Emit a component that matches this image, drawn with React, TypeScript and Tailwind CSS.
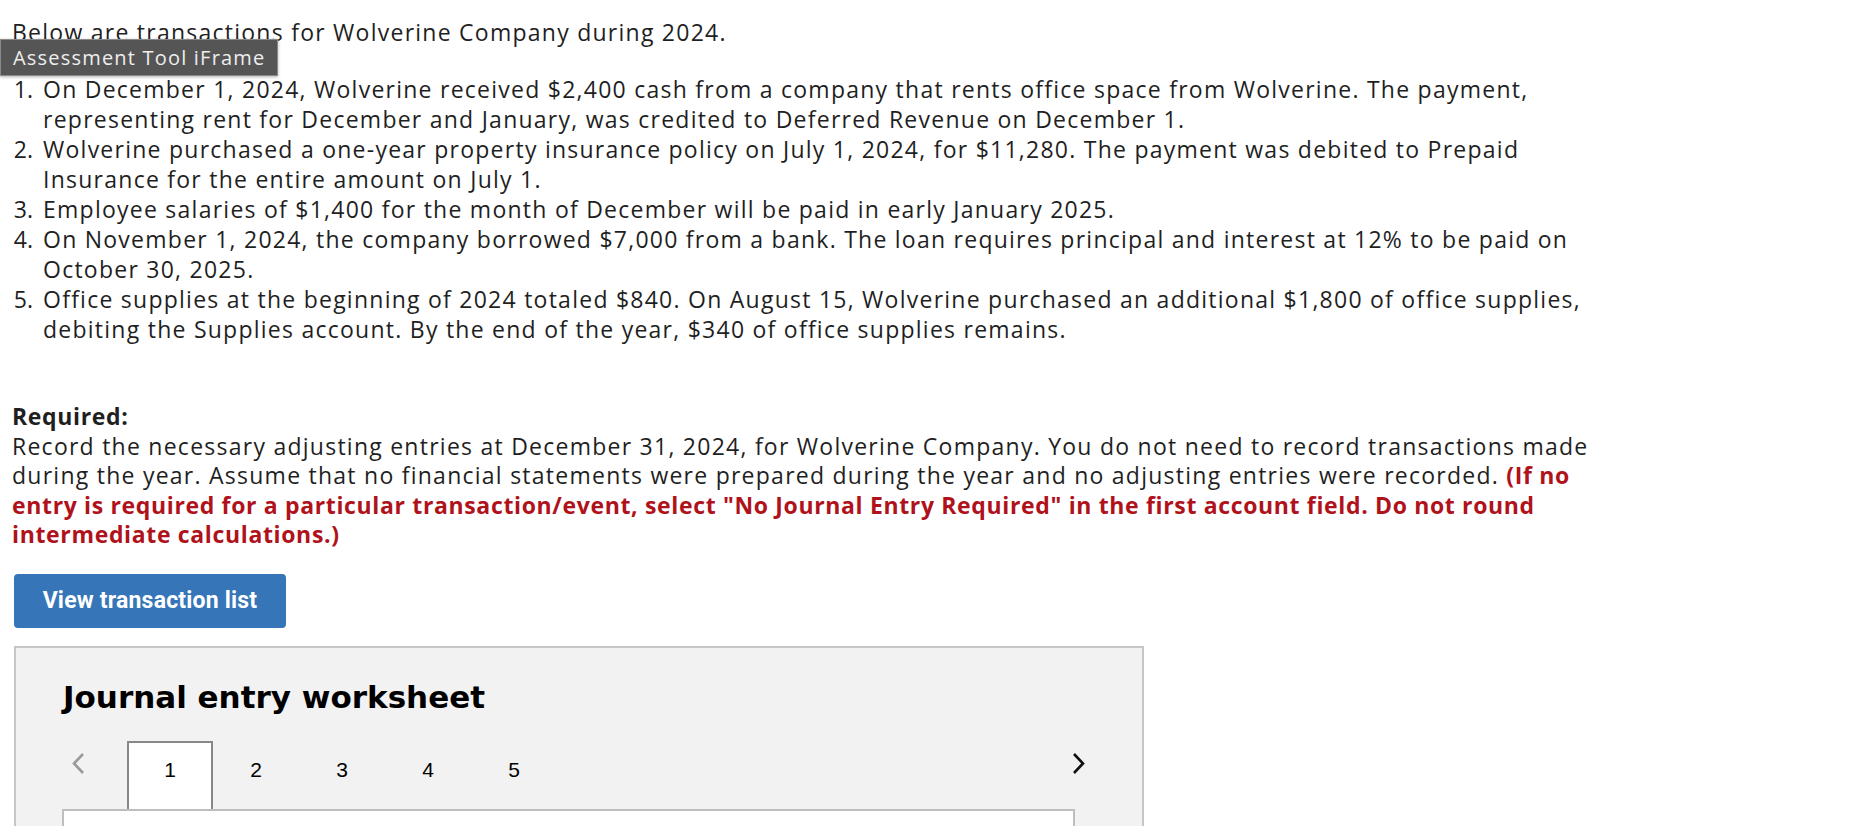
const BODY = "font-['Open_Sans',sans-serif]";

function ChevronLeft({ className }: { className?: string }) {
  return (
    <svg width="14" height="23" viewBox="0 0 14 23" className={className} fill="none">
      <path d="M12 2 L3 11.5 L12 21" stroke="currentColor" strokeWidth="2.6" />
    </svg>
  );
}
function ChevronRight({ className }: { className?: string }) {
  return (
    <svg width="14" height="23" viewBox="0 0 14 23" className={className} fill="none">
      <path d="M2 2 L11 11.5 L2 21" stroke="currentColor" strokeWidth="2.6" />
    </svg>
  );
}

export default function App() {
  const items: React.ReactNode[] = [
    <>
      On December 1, 2024, Wolverine received $2,400 cash from a company that rents office space from Wolverine. The payment,
      <br />
      representing rent for December and January, was credited to Deferred Revenue on December 1.
    </>,
    <>
      Wolverine purchased a one-year property insurance policy on July 1, 2024, for $11,280. The payment was debited to Prepaid
      <br />
      Insurance for the entire amount on July 1.
    </>,
    <>Employee salaries of $1,400 for the month of December will be paid in early January 2025.</>,
    <>
      On November 1, 2024, the company borrowed $7,000 from a bank. The loan requires principal and interest at 12% to be paid on
      <br />
      October 30, 2025.
    </>,
    <>
      Office supplies at the beginning of 2024 totaled $840. On August 15, Wolverine purchased an additional $1,800 of office supplies,
      <br />
      debiting the Supplies account. By the end of the year, $340 of office supplies remains.
    </>,
  ];

  return (
    <div className={`relative min-h-[826px] bg-white text-[#1f1f1f] ${BODY}`}>
      <div className="pt-[17px]">
        <p className="whitespace-nowrap pl-[12px] text-[23px] leading-[30px] tracking-[1.25px]">
          Below are transactions for Wolverine Company during 2024.
        </p>
        <ol className="mt-[27px] text-[23px] leading-[30px] tracking-[1.25px]">
          {items.map((it, i) => (
            <li key={i} className="flex whitespace-nowrap">
              <span className="w-[43px] shrink-0 pr-[10px] text-right tracking-[0px]">{i + 1}.</span>
              <span>{it}</span>
            </li>
          ))}
        </ol>
        <div className="mt-[58px] whitespace-nowrap pl-[12px] text-[23px] leading-[29.6px] tracking-[1.25px]">
          <p className="font-bold tracking-[0.65px]">Required:</p>
          <p>
            Record the necessary adjusting entries at December 31, 2024, for Wolverine Company. You do not need to record transactions made
            <br />
            during the year. Assume that no financial statements were prepared during the year and no adjusting entries were recorded.{" "}
            <span className="font-bold tracking-[0.65px] text-[#b0121b]">
              (If no
              <br />
              entry is required for a particular transaction/event, select "No Journal Entry Required" in the first account field. Do not round
              <br />
              intermediate calculations.)
            </span>
          </p>
        </div>
        <div className="mt-[24px] pl-[14px]">
          <button className="flex h-[54px] w-[272px] items-center justify-center rounded-[4px] bg-[#3575b8] font-['Roboto',sans-serif] text-[23px] font-bold tracking-[0.2px] text-white">
            View transaction list
          </button>
        </div>
        <div className="ml-[14px] mt-[18px] w-[1130px] border-2 border-[#c6c6c6] bg-[#f2f2f2]">
          <h2 className="pl-[47px] pt-[31px] font-['DejaVu_Sans',sans-serif] text-[31px] font-bold leading-[36px] text-black">
            Journal entry worksheet
          </h2>
          <div className="mt-[26px] flex items-start pl-[55px] pr-[56px]">
            <ChevronLeft className="mt-[11px] text-[#9a9a9a]" />
            <div className="ml-[42px] flex">
              {[1, 2, 3, 4, 5].map((n) => (
                <div
                  key={n}
                  className={`h-[68px] w-[86px] border-2 border-b-0 pt-[15px] text-center font-['Liberation_Sans',sans-serif] text-[21px] leading-[24px] text-black ${
                    n === 1 ? "border-[#888] bg-white" : "border-transparent"
                  }`}
                >
                  {n}
                </div>
              ))}
            </div>
            <div className="flex-1" />
            <ChevronRight className="mt-[11px] text-[#111]" />
          </div>
          <div className="ml-[46px] h-[200px] w-[1013px] border-2 border-[#bebebe] bg-white" />
        </div>
      </div>
      <div className="absolute left-0 top-[39px] flex h-[37px] w-[278px] items-center border border-[#8a8a8a] bg-[#555] pl-[12px] text-[20px] tracking-[1.2px] text-[#eee] shadow-[0_1px_3px_rgba(0,0,0,0.3)]">
        Assessment Tool iFrame
      </div>
    </div>
  );
}
